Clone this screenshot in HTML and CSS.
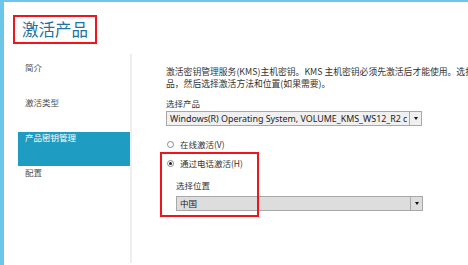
FILE: index.html
```html
<!DOCTYPE html>
<html lang="zh-CN">
<head>
<meta charset="utf-8">
<title>激活产品</title>
<link rel="stylesheet" href="styles.css">
</head>
<body>
<div class="window">
  <div class="header">
    <h1 class="title">激活产品</h1>
  </div>
  <div class="main">
    <nav class="sidebar">
      <div class="nav-item">简介</div>
      <div class="nav-item">激活类型</div>
      <div class="nav-item active">产品密钥管理</div>
      <div class="nav-item">配置</div>
    </nav>
    <div class="divider"></div>
    <div class="content">
      <p class="desc">激活密钥管理服务(KMS)主机密钥。KMS 主机密钥必须先激活后才能使用。选择产品，然后选择激活方法和位置(如果需要)。</p>
      <div class="label">选择产品</div>
      <div class="select light">
        <span class="select-text">Windows(R) Operating System, VOLUME_KMS_WS12_R2 client channel</span>
        <span class="select-btn"><span class="caret"></span></span>
      </div>
      <div class="radio-row first">
        <span class="radio"></span><span>在线激活(V)</span>
      </div>
      <div class="radio-row second">
        <span class="radio checked"></span><span>通过电话激活(H)</span>
      </div>
      <div class="label sub">选择位置</div>
      <div class="select dark indent">
        <span class="select-text">中国</span>
        <span class="select-btn"><span class="caret"></span></span>
      </div>
      <div class="highlight"></div>
    </div>
  </div>
</div>
</body>
</html>
```

FILE: styles.css
```css
html, body {
  margin: 0;
  padding: 0;
  background: #ffffff;
  overflow: hidden;
}

.window {
  width: 468px;
  height: 265px;
  box-sizing: border-box;
  border-top: 2px solid #6cc6ea;
  border-left: 4px solid #6cc6ea;
  background: #ffffff;
  font-family: "Noto Sans CJK SC", "Noto Sans", sans-serif;
  color: #333333;
  overflow: hidden;
}

.header {
  padding: 13px 0 0 9px;
  height: 37px;
}

.title {
  display: inline-block;
  margin: 0;
  border: 2px solid #f0141c;
  padding: 0 7px;
  height: 25px;
  line-height: 25px;
  font-size: 16.5px;
  font-weight: normal;
  color: #2073a0;
}

.main {
  display: flex;
  height: 211px;
}

.sidebar {
  width: 126px;
  flex: none;
  padding-top: 10px;
}

.nav-item {
  height: 35px;
  margin-left: 14px;
  padding-left: 7px;
  font-size: 8.5px;
  line-height: 11px;
  color: #505050;
  box-sizing: border-box;
}

.nav-item.active {
  height: 34px;
  margin-bottom: 1px;
  background: #1f9cc1;
  color: #ffffff;
}

.divider {
  width: 2px;
  flex: none;
  margin-top: 2px;
  background: #eeeeee;
}

.content {
  position: relative;
  flex: 1;
  padding: 14px 0 0 34px;
  font-size: 8.5px;
}

.desc {
  margin: 0;
  width: 330px;
  font-size: 8.8px;
  line-height: 12px;
}

.label {
  margin-top: 7px;
  line-height: 12px;
}

.label.sub {
  margin-top: 10px;
  margin-left: 10px;
}

.select {
  display: flex;
  margin-top: 2px;
  width: 256px;
  height: 15px;
  box-sizing: border-box;
  border: 1px solid #a8a8a8;
  font-family: "Noto Sans", "Noto Sans CJK SC", sans-serif;
}

.select.light {
  background: #f0f0f0;
}

.select.dark {
  background: #dddddd;
  margin-top: 5px;
}

.select.indent {
  margin-left: 10px;
  width: 247px;
}

.select-text {
  flex: 1;
  overflow: hidden;
  white-space: nowrap;
  padding-left: 3px;
  line-height: 13px;
  color: #222222;
}

.select.light .select-text {
  font-size: 8.9px;
  margin-right: 2px;
}

.select-btn {
  flex: none;
  width: 11px;
  border-left: 1px solid #a8a8a8;
  display: flex;
  align-items: center;
  justify-content: center;
}

.caret {
  width: 0;
  height: 0;
  border-left: 2.5px solid transparent;
  border-right: 2.5px solid transparent;
  border-top: 3px solid #111111;
}

.radio-row {
  display: flex;
  align-items: center;
  gap: 6px;
  height: 12px;
  line-height: 12px;
  padding-left: 1px;
}

.radio-row.first {
  margin-top: 12px;
}

.radio-row.second {
  margin-top: 7px;
}

.radio {
  width: 7px;
  height: 7px;
  box-sizing: border-box;
  border: 1px solid #8a8a8a;
  border-radius: 50%;
  background: #ffffff;
  position: relative;
}

.radio.checked::after {
  content: "";
  position: absolute;
  left: 1px;
  top: 1px;
  width: 3px;
  height: 3px;
  border-radius: 50%;
  background: #222222;
}

.highlight {
  position: absolute;
  left: 28px;
  top: 100px;
  width: 99px;
  height: 65px;
  box-sizing: border-box;
  border: 2px solid #f0141c;
  pointer-events: none;
}
```
